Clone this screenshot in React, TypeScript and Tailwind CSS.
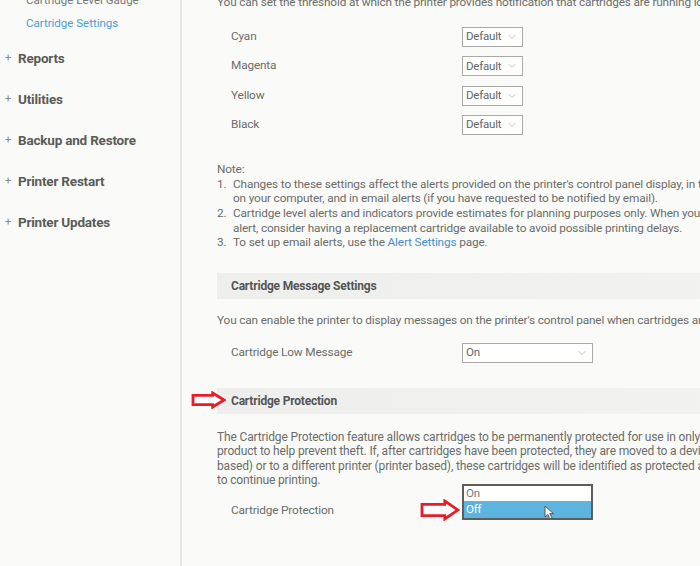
import { ChevronDown } from "lucide-react";

const navItems = [
  "Reports",
  "Utilities",
  "Backup and Restore",
  "Printer Restart",
  "Printer Updates",
];

const levels = ["Cyan", "Magenta", "Yellow", "Black"];

function SmallSelect({ value, wide }: { value: string; wide?: boolean }) {
  return (
    <div
      className={`flex h-[20px] items-center justify-between border border-[#a9aaa8] bg-white pl-[3px] pr-[4px] text-[11.5px] tracking-[-0.2px] text-[#666] ${
        wide ? "w-[131px]" : "w-[61px]"
      }`}
    >
      <span>{value}</span>
      <ChevronDown size={12} strokeWidth={1.2} className="text-[#999]" />
    </div>
  );
}

function RedArrow({ w, h }: { w: number; h: number }) {
  const s = h * 0.26;
  const head = w * 0.38;
  return (
    <svg width={w} height={h} viewBox={`0 0 ${w} ${h}`}>
      <path
        d={`M2 ${h / 2 - s} H${w - head} V2 L${w - 2} ${h / 2} L${w - head} ${h - 2} V${h / 2 + s} H2 Z`}
        fill="white"
        stroke="#e61e2a"
        strokeWidth={2.8}
        strokeLinejoin="miter"
      />
    </svg>
  );
}

function SectionBar({ title }: { title: string }) {
  return (
    <div className="flex h-[26px] items-center bg-gradient-to-r from-[#eeefed] to-[#f3f4f2] pl-[14px] text-[12px] font-bold tracking-[-0.2px] text-[#555]">
      {title}
    </div>
  );
}

export default function App() {
  return (
    <div
      className="relative flex h-[566px] w-[700px] overflow-hidden bg-[#fafbf8] text-[#6b6c6a]"
      style={{ fontFamily: "Roboto, 'Open Sans', sans-serif" }}
    >
      {/* sidebar */}
      <aside className="flex w-[182px] shrink-0 flex-col border-r-2 border-[#e6e7e5]">
        <div className="-mt-[7px] pl-[26px] text-[11.5px] leading-[14px] text-[#777]">
          Cartridge Level Gauge
        </div>
        <div className="mt-[9px] pl-[26px] text-[11.5px] leading-[14px] text-[#4b9bd6]">
          Cartridge Settings
        </div>
        <ul className="mt-[20px] flex flex-col gap-[25px]">
          {navItems.map((item) => (
            <li
              key={item}
              className="flex h-[16px] items-center text-[13.5px] font-bold tracking-[-0.2px] text-[#5a5b59]"
            >
              <span className="w-[18px] pl-[5px] text-[11px] font-normal text-[#888]">+</span>
              <span>{item}</span>
            </li>
          ))}
        </ul>
      </aside>

      {/* main */}
      <main className="w-[700px] shrink-0 pl-[35px] text-[11.8px] tracking-[-0.15px]">
        <p className="-mt-[5px] whitespace-nowrap leading-[14px]">
          You can set the threshold at which the printer provides notification that cartridges are running low.
        </p>

        <div className="mt-[18px] flex flex-col gap-[9.3px]">
          {levels.map((l) => (
            <div key={l} className="flex h-[20px] items-center">
              <span className="w-[245px] pl-[14px]">{l}</span>
              <SmallSelect value="Default" />
            </div>
          ))}
        </div>

        <p className="mt-[27px] leading-[14px]">Note:</p>
        <ol className="mt-[1px] whitespace-nowrap leading-[14.6px]">
          <li className="flex">
            <span className="w-[16px]">1.</span>
            <span>
              Changes to these settings affect the alerts provided on the printer's control panel display, in the HP software
              <br />
              on your computer, and in email alerts (if you have requested to be notified by email).
            </span>
          </li>
          <li className="flex">
            <span className="w-[16px]">2.</span>
            <span>
              Cartridge level alerts and indicators provide estimates for planning purposes only. When you receive a low-ink
              <br />
              alert, consider having a replacement cartridge available to avoid possible printing delays.
            </span>
          </li>
          <li className="flex">
            <span className="w-[16px]">3.</span>
            <span>
              To set up email alerts, use the <span className="text-[#3f8fd2]">Alert Settings</span> page.
            </span>
          </li>
        </ol>

        <div className="mt-[23px]">
          <SectionBar title="Cartridge Message Settings" />
        </div>
        <p className="mt-[14px] whitespace-nowrap leading-[14px]">
          You can enable the printer to display messages on the printer's control panel when cartridges are low.
        </p>
        <div className="mt-[16px] flex h-[20px] items-center">
          <span className="w-[245px] pl-[14px]">Cartridge Low Message</span>
          <SmallSelect value="On" wide />
        </div>

        <div className="mt-[25px]">
          <SectionBar title="Cartridge Protection" />
        </div>
        <p className="mt-[16px] whitespace-nowrap text-[12px] leading-[14.4px]">
          The Cartridge Protection feature allows cartridges to be permanently protected for use in only one
          <br />
          product to help prevent theft. If, after cartridges have been protected, they are moved to a device (region
          <br />
          based) or to a different printer (printer based), these cartridges will be identified as protected and will not work
          <br />
          to continue printing.
        </p>
        <div className="-mt-[3px] flex items-start">
          <span className="mt-[18px] w-[245px] pl-[14px]">Cartridge Protection</span>
          <div className="relative w-[131px] border-2 border-[#5d5e5c] bg-white text-[11.5px]">
            <div className="flex h-[15px] items-center pl-[2px] text-[#777]">On</div>
            <div className="flex h-[17px] items-center bg-[#5db5df] pl-[2px] text-white">Off</div>
            <svg
              className="absolute left-[80px] top-[19px]"
              width="11"
              height="15"
              viewBox="0 0 11 15"
            >
              <path d="M1 1 L1 12 L3.8 9.5 L6 14 L8 13 L5.8 8.6 L9.5 8.6 Z" fill="white" stroke="#555" strokeWidth="1" />
            </svg>
          </div>
        </div>
      </main>

      {/* annotation arrows */}
      <div className="absolute left-[191px] top-[391px]">
        <RedArrow w={35} h={18} />
      </div>
      <div className="absolute left-[420px] top-[499px]">
        <RedArrow w={40} h={22} />
      </div>
    </div>
  );
}
